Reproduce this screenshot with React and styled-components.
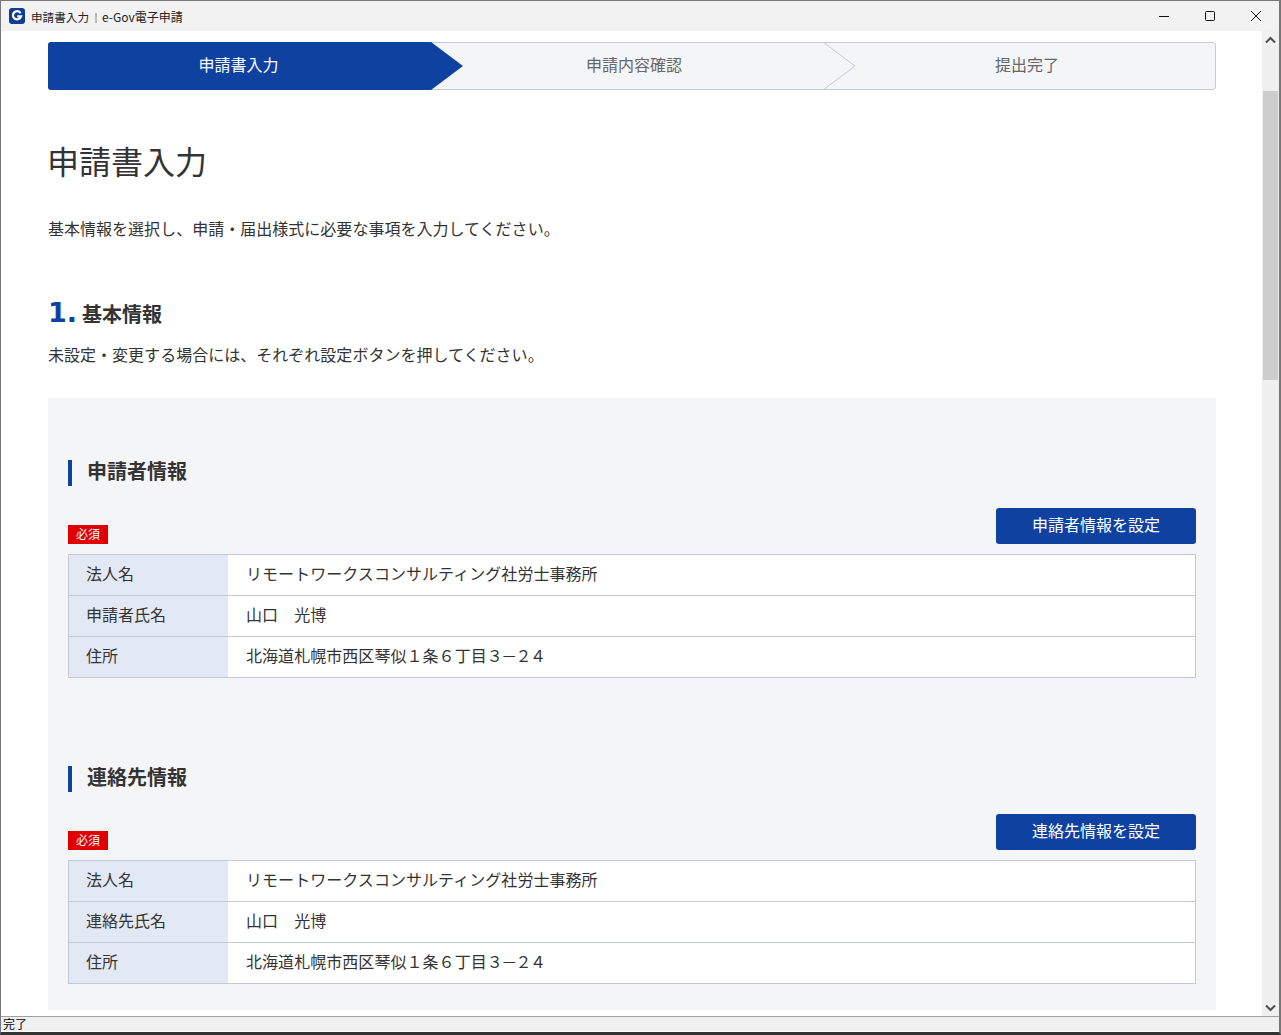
import styled, { createGlobalStyle } from "styled-components";

const GlobalStyle = createGlobalStyle`
  html, body {
    margin: 0;
    padding: 0;
    height: 100%;
    overflow: hidden;
    background: #fff;
    font-family: "Noto Sans CJK JP", "Noto Sans", sans-serif;
    color: #333;
  }
  * { box-sizing: border-box; }
`;

const Window = styled.div`
  width: 1281px;
  height: 1035px;
  display: flex;
  flex-direction: column;
  border-top: 1px solid #777;
  border-left: 1px solid #777;
  border-right: 2px solid #777;
  border-bottom: 3px solid #333;
  overflow: hidden;
`;

const TitleBar = styled.header`
  height: 30px;
  flex: none;
  display: flex;
  align-items: center;
  background: #f2f2f2;
  padding-left: 8px;
  font-size: 11.6px;
  color: #222;
`;

const AppIcon = styled.svg`
  width: 16px;
  height: 16px;
  margin-right: 6px;
`;

const TitleText = styled.span`
  flex: 1;
  white-space: nowrap;
`;

const Divider = styled.span`
  display: inline-block;
  width: 2px;
  height: 10px;
  margin: 0 5px 0 6px;
  vertical-align: -1px;
  background: #bbb;
`;

const AppName = styled.span`
  font-size: 12px;
`;

const WinButton = styled.button`
  width: 46px;
  height: 30px;
  padding: 0;
  border: 0;
  background: none;
  display: flex;
  align-items: center;
  justify-content: center;
  color: #111;
`;

const Body = styled.div`
  flex: 1;
  min-height: 0;
  display: flex;
`;

const Main = styled.main`
  flex: 1;
  overflow: hidden;
  padding: 11px 0 0 47px;
  background: #fff;
`;

const Content = styled.div`
  width: 1168px;
`;

const Stepper = styled.ol`
  display: grid;
  grid-template-columns: 382px 392px 392px;
  height: 48px;
  margin: 0;
  padding: 0;
  list-style: none;
  background: #f4f5f7;
  border: 1px solid #c5c8d6;
  border-radius: 3px;
`;

const Step = styled.li`
  position: relative;
  display: flex;
  align-items: center;
  justify-content: center;
  margin: ${(p) => (p.$active ? "-1px 0 -1px -1px" : "0")};
  padding: 0 ${(p) => p.$right || 0}px 4px ${(p) => p.$left || 0}px;
  font-size: 16px;
  color: ${(p) => (p.$active ? "#fff" : "#666")};
  background: ${(p) => (p.$active ? "#0f41a0" : "transparent")};
  border-radius: ${(p) => (p.$active ? "3px 0 0 3px" : "0")};
`;

const StepArrow = styled.svg`
  position: absolute;
  top: 0;
  left: 100%;
  width: 32px;
  height: 100%;
  z-index: 1;
`;

const Title = styled.h1`
  margin: 46px 0 0 -1px;
  font-size: 32px;
  line-height: 48px;
  font-weight: 400;
  color: #333;
`;

const Lead = styled.p`
  margin: ${(p) => p.$top}px 0 0;
  font-size: 16px;
  letter-spacing: 0.02px;
  line-height: 24px;
  color: #333;
`;

const SectionHead = styled.h2`
  display: flex;
  align-items: baseline;
  margin: 54px 0 0;
  height: 40px;
  line-height: 38px;
  font-size: 20px;
  font-weight: 700;
  color: #333;
`;

const SectionNo = styled.span`
  font-family: "DejaVu Sans", "Liberation Sans", sans-serif;
  font-size: 27px;
  font-weight: 700;
  color: #0f41a0;
  width: 34px;
`;

const Panel = styled.section`
  margin-top: 32px;
  padding: 62px 20px 26px;
  background: #f4f5f7;
`;

const Group = styled.div`
  & + & {
    margin-top: 88px;
  }
`;

const GroupTitle = styled.h3`
  margin: 0;
  height: 26px;
  padding-left: 15px;
  border-left: 4px solid #0f41a0;
  font-size: 20px;
  line-height: 22px;
  font-weight: 700;
  color: #333;
`;

const ActionRow = styled.div`
  display: flex;
  align-items: flex-end;
  justify-content: space-between;
  margin: 22px 0 10px;
`;

const Badge = styled.span`
  width: 40px;
  height: 19px;
  display: flex;
  align-items: center;
  justify-content: center;
  padding-bottom: 1px;
  background: #e00000;
  color: #fff;
  font-size: 12px;
  line-height: 18px;
`;

const SetButton = styled.button`
  width: 200px;
  height: 36px;
  padding: 0 0 4px;
  border: 0;
  border-radius: 3px;
  background: #0f41a0;
  color: #fff;
  font-family: inherit;
  font-size: 16px;
`;

const InfoTable = styled.dl`
  margin: 0;
  background: #fff;
  border: 1px solid #c5c8d6;
`;

const InfoRow = styled.div`
  display: flex;
  height: 40px;
  & + & {
    height: 41px;
    border-top: 1px solid #c5c8d6;
  }
`;

const InfoLabel = styled.dt`
  width: 159px;
  flex: none;
  display: flex;
  align-items: center;
  padding: 0 0 4px 17px;
  background: #e3e9f4;
  font-size: 16px;
  color: #333;
`;

const InfoValue = styled.dd`
  margin: 0;
  flex: 1;
  display: flex;
  align-items: center;
  padding: 0 0 4px 18px;
  font-size: 16px;
  letter-spacing: 0.05px;
  color: #333;
`;

const TightDigits = styled.span`
  letter-spacing: -1.6px;
`;

const ScrollBar = styled.div`
  width: 17px;
  flex: none;
  display: flex;
  flex-direction: column;
  background: #f0f0f0;
`;

const ScrollArrow = styled.div`
  height: 17px;
  flex: none;
  display: flex;
  align-items: center;
  justify-content: center;
`;

const ScrollThumb = styled.div`
  height: 289px;
  margin: 43px 1px 0;
  background: #cdcdcd;
`;

const ScrollRest = styled.div`
  flex: 1;
`;

const StatusBar = styled.footer`
  height: 16px;
  flex: none;
  border-top: 1px solid #a0a0a0;
  border-bottom: 1px solid #fff;
  background: #f0f0f0;
  padding-left: 2px;
  font-size: 12px;
  line-height: 14px;
  color: #000;
`;

const groups = [
  {
    title: "申請者情報",
    button: "申請者情報を設定",
    nameLabel: "申請者氏名",
  },
  {
    title: "連絡先情報",
    button: "連絡先情報を設定",
    nameLabel: "連絡先氏名",
  },
];

const InfoGroup = ({ title, button, nameLabel }) => (
  <Group>
    <GroupTitle>{title}</GroupTitle>
    <ActionRow>
      <Badge>必須</Badge>
      <SetButton>{button}</SetButton>
    </ActionRow>
    <InfoTable>
      <InfoRow>
        <InfoLabel>法人名</InfoLabel>
        <InfoValue>リモートワークスコンサルティング社労士事務所</InfoValue>
      </InfoRow>
      <InfoRow>
        <InfoLabel>{nameLabel}</InfoLabel>
        <InfoValue>山口　光博</InfoValue>
      </InfoRow>
      <InfoRow>
        <InfoLabel>住所</InfoLabel>
        <InfoValue>
          <span>
            北海道札幌市西区琴似１条６丁目<TightDigits>３－２</TightDigits>４
          </span>
        </InfoValue>
      </InfoRow>
    </InfoTable>
  </Group>
);

export default function App() {
  return (
    <>
      <GlobalStyle />
      <Window>
        <TitleBar>
          <AppIcon viewBox="0 0 16 16">
            <rect width="16" height="16" rx="3" fill="#0f3d96" />
            <path
              d="M11.6 5.2A4.1 4.1 0 1 0 12 8.4H8.2"
              fill="none"
              stroke="#fff"
              strokeWidth="2.2"
            />
          </AppIcon>
          <TitleText>
            申請書入力<Divider /><AppName>e-Gov電子申請</AppName>
          </TitleText>
          <WinButton aria-label="最小化">
            <svg width="10" height="10" viewBox="0 0 10 10">
              <path d="M0 5.5h10" stroke="currentColor" fill="none" />
            </svg>
          </WinButton>
          <WinButton aria-label="最大化">
            <svg width="10" height="10" viewBox="0 0 10 10">
              <rect x=".5" y=".5" width="9" height="9" rx="1" stroke="currentColor" fill="none" />
            </svg>
          </WinButton>
          <WinButton aria-label="閉じる">
            <svg width="10" height="10" viewBox="0 0 10 10">
              <path d="M0 0l10 10M10 0L0 10" stroke="currentColor" fill="none" />
            </svg>
          </WinButton>
        </TitleBar>
        <Body>
          <Main>
            <Content>
              <Stepper>
                <Step $active $right={2}>
                  申請書入力
                  <StepArrow viewBox="0 0 32 48" preserveAspectRatio="none">
                    <path d="M0 0L32 24L0 48Z" fill="#0f41a0" />
                  </StepArrow>
                </Step>
                <Step $left={14}>
                  申請内容確認
                  <StepArrow viewBox="0 0 32 46" preserveAspectRatio="none">
                    <path d="M0 -1L32 23L0 47" fill="#f4f5f7" stroke="#c5c8d6" />
                  </StepArrow>
                </Step>
                <Step $left={16}>提出完了</Step>
              </Stepper>
              <Title>申請書入力</Title>
              <Lead $top={32}>基本情報を選択し、申請・届出様式に必要な事項を入力してください。</Lead>
              <SectionHead>
                <SectionNo>1.</SectionNo>基本情報
              </SectionHead>
              <Lead $top={8}>未設定・変更する場合には、それぞれ設定ボタンを押してください。</Lead>
              <Panel>
                {groups.map((group) => (
                  <InfoGroup key={group.title} {...group} />
                ))}
              </Panel>
            </Content>
          </Main>
          <ScrollBar>
            <ScrollArrow>
              <svg width="11" height="8" viewBox="0 0 11 8">
                <path d="M1 6.5l4.5-4.5L10 6.5" stroke="#505050" strokeWidth="2" fill="none" />
              </svg>
            </ScrollArrow>
            <ScrollThumb />
            <ScrollRest />
            <ScrollArrow>
              <svg width="11" height="8" viewBox="0 0 11 8">
                <path d="M1 1.5L5.5 6 10 1.5" stroke="#505050" strokeWidth="2" fill="none" />
              </svg>
            </ScrollArrow>
          </ScrollBar>
        </Body>
        <StatusBar>完了</StatusBar>
      </Window>
    </>
  );
}
